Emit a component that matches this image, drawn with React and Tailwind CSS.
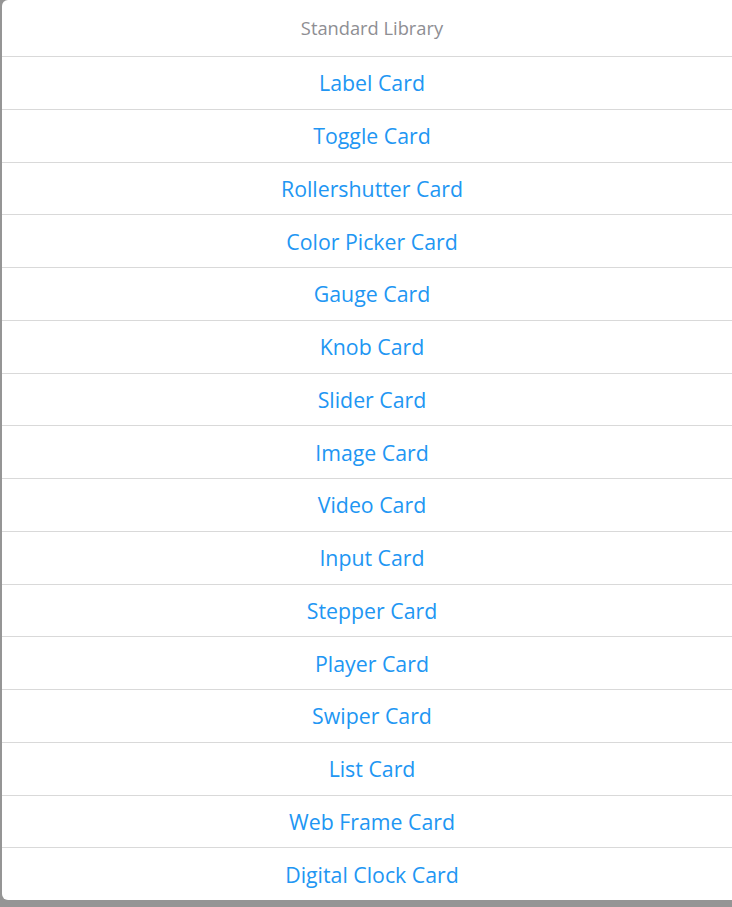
import React from "react";

const items = [
	"Label Card",
	"Toggle Card",
	"Rollershutter Card",
	"Color Picker Card",
	"Gauge Card",
	"Knob Card",
	"Slider Card",
	"Image Card",
	"Video Card",
	"Input Card",
	"Stepper Card",
	"Player Card",
	"Swiper Card",
	"List Card",
	"Web Frame Card",
	"Digital Clock Card",
];

export default function App() {
	return (
		<div
			className="h-[907px] w-[732px] overflow-hidden bg-[#959595] pl-[2px]"
			style={{ fontFamily: '"Open Sans", "Noto Sans", sans-serif' }}
		>
			<div className="w-[740px] rounded-[6px] bg-white">
				<div className="flex h-[56px] items-center justify-center text-[18.3px] text-[#8e8e93]">
					Standard Library
				</div>
				{items.map((label) => (
					<button
						key={label}
						className="flex h-[52.75px] w-full items-center justify-center border-t border-[#d9d9d9] pt-[1px] text-[21.3px] text-[#2196f3]"
					>
						{label}
					</button>
				))}
			</div>
		</div>
	);
}
